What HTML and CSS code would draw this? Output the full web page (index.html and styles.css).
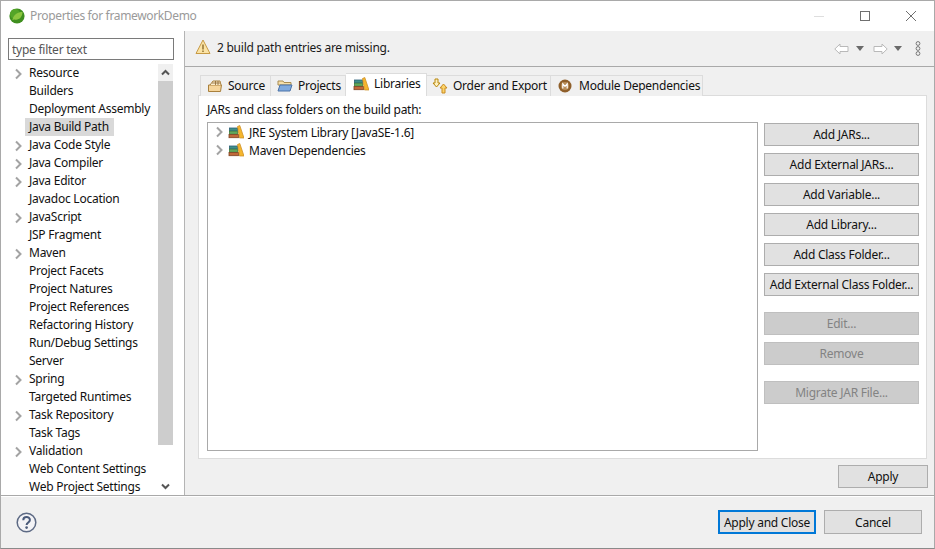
FILE: index.html
```html
<!DOCTYPE html>
<html lang="en">
<head>
<meta charset="utf-8">
<title>Properties for frameworkDemo</title>
<link rel="stylesheet" href="styles.css">
</head>
<body>
<svg class="defs" width="0" height="0">
  <symbol id="chev" viewBox="0 0 8 12"><path d="M2 1.500 6.500 6 2 10.500" fill="none" stroke="#a3a3a3" stroke-width="2"/></symbol>
  <symbol id="lib" viewBox="0 0 16 16">
    <rect x="1.500" y="4" width="8" height="3" fill="#3f8f88" stroke="#2c5f78" stroke-width=".8"/>
    <rect x="1.500" y="7.200" width="8" height="3" fill="#63a85c" stroke="#3e7c3a" stroke-width=".8"/>
    <rect x="1" y="10.400" width="9.500" height="3.300" fill="#c0693a" stroke="#7f4322" stroke-width=".8"/>
    <path d="M9.500 2.500 11.800 1.500 16 14h-4.500z" fill="#f5b62e" stroke="#c98a1e" stroke-width=".7"/>
  </symbol>
</svg>
<div class="window">
  <header class="titlebar">
    <svg class="logo" width="16" height="16" viewBox="0 0 16 16"><circle cx="8" cy="8" r="7.600" fill="#3f8f1f"/><circle cx="6" cy="6" r="5" fill="#54a528"/><path d="M3.500 11.500C5 6 9 4 13.500 4 13.500 9 10 12.500 5.500 11.500 5 11.400 4 12 3.500 12z" fill="#8cc63f"/></svg>
    <span class="title">Properties for frameworkDemo</span>
    <div class="winctl">
      <svg width="12" height="12" viewBox="0 0 12 12"><path d="M1 6.500h10" stroke="#dedede"/></svg>
      <svg width="12" height="12" viewBox="0 0 12 12"><rect x="1.500" y="1.500" width="9" height="9" fill="none" stroke="#6f6f6f"/></svg>
      <svg width="12" height="12" viewBox="0 0 12 12"><path d="M1 1l10 10M11 1 1 11" stroke="#6f6f6f"/></svg>
    </div>
  </header>
  <div class="main">
    <aside class="side">
      <input class="filter" type="text" value="type filter text">
      <div class="treewrap">
        <ul class="nav">
          <li class="exp"><svg class="chev"><use href="#chev"/></svg><span>Resource</span></li>
          <li><span>Builders</span></li>
          <li><span>Deployment Assembly</span></li>
          <li class="sel"><span>Java Build Path</span></li>
          <li class="exp"><svg class="chev"><use href="#chev"/></svg><span>Java Code Style</span></li>
          <li class="exp"><svg class="chev"><use href="#chev"/></svg><span>Java Compiler</span></li>
          <li class="exp"><svg class="chev"><use href="#chev"/></svg><span>Java Editor</span></li>
          <li><span>Javadoc Location</span></li>
          <li class="exp"><svg class="chev"><use href="#chev"/></svg><span>JavaScript</span></li>
          <li><span>JSP Fragment</span></li>
          <li class="exp"><svg class="chev"><use href="#chev"/></svg><span>Maven</span></li>
          <li><span>Project Facets</span></li>
          <li><span>Project Natures</span></li>
          <li><span>Project References</span></li>
          <li><span>Refactoring History</span></li>
          <li><span>Run/Debug Settings</span></li>
          <li><span>Server</span></li>
          <li class="exp"><svg class="chev"><use href="#chev"/></svg><span>Spring</span></li>
          <li><span>Targeted Runtimes</span></li>
          <li class="exp"><svg class="chev"><use href="#chev"/></svg><span>Task Repository</span></li>
          <li><span>Task Tags</span></li>
          <li class="exp"><svg class="chev"><use href="#chev"/></svg><span>Validation</span></li>
          <li><span>Web Content Settings</span></li>
          <li><span>Web Project Settings</span></li>
        </ul>
        <div class="scroll">
          <svg class="sarrow" width="15" height="17" viewBox="0 0 15 17"><path d="M4 10.500 7.500 7l3.500 3.500" fill="none" stroke="#555" stroke-width="2"/></svg>
          <div class="thumb"></div>
          <svg class="sarrow" width="15" height="17" viewBox="0 0 15 17"><path d="M4 6.500 7.500 10l3.500-3.500" fill="none" stroke="#555" stroke-width="2"/></svg>
        </div>
      </div>
    </aside>
    <section class="pane">
      <div class="msgbar">
        <svg class="warn" width="16" height="16" viewBox="0 0 16 16"><path d="M8 1 15 14.500H1z" fill="#fbe3a4" stroke="#c79a45" stroke-linejoin="round"/><path d="M8 5.500v5M8 11.500v1.600" stroke="#8a6a2a" stroke-width="1.400"/></svg>
        <span class="msg">2 build path entries are missing.</span>
        <div class="nav-tools">
          <svg width="15" height="12" viewBox="0 0 15 12"><path d="M.8 6 6 1v2.500h8v5H6V11z" fill="#fff" stroke="#b9b9b9"/></svg>
          <svg class="drop" width="8" height="5" viewBox="0 0 8 5"><path d="M0 0h8L4 5z" fill="#6a6a6a"/></svg>
          <svg class="fwd" width="15" height="12" viewBox="0 0 15 12"><path d="M14.200 6 9 1v2.500H1v5h8V11z" fill="#fff" stroke="#b9b9b9"/></svg>
          <svg class="drop" width="8" height="5" viewBox="0 0 8 5"><path d="M0 0h8L4 5z" fill="#6a6a6a"/></svg>
          <svg class="dots" width="6" height="15" viewBox="0 0 6 15"><g fill="none" stroke="#777"><circle cx="3" cy="2.500" r="1.900"/><circle cx="3" cy="7.500" r="1.900"/><circle cx="3" cy="12.500" r="1.900"/></g></svg>
        </div>
      </div>
      <div class="body">
        <div class="tabs">
          <div class="tab t1"><svg width="16" height="16" viewBox="0 0 16 16"><path d="M1.500 13.500 1.500 7h13l-1 6.500z" fill="#f6d59b" stroke="#a9803d"/><path d="M3 7 6 3h7l1 4" fill="#fbeccc" stroke="#a9803d"/><path d="M8.500 3v4M11 3v4M5 5h8" stroke="#8a6430" stroke-width=".8"/></svg><span>Source</span></div>
          <div class="tab t2"><svg width="16" height="16" viewBox="0 0 16 16"><path d="M1 3h5l1 1.500h7V7H1z" fill="#f6dfa8" stroke="#a98c52"/><path d="M1 13 3 7h12l-2 6z" fill="#7fa9dd" stroke="#4b72a8"/></svg><span>Projects</span></div>
          <div class="tab t3 on"><svg width="16" height="16"><use href="#lib"/></svg><span>Libraries</span></div>
          <div class="tab t4"><svg width="16" height="16" viewBox="0 0 16 16"><path d="M3 1h3v4h2L4.500 9 1 5h2z" fill="#fdf0c0" stroke="#b8860b"/><path d="M10 15V10H8l3.500-4 3.500 4h-2v5z" fill="#fbd36a" stroke="#c98a1e"/></svg><span>Order and Export</span></div>
          <div class="tab t5"><svg width="14" height="14" viewBox="0 0 14 14"><circle cx="7" cy="7" r="6.500" fill="#8f5f2a"/><circle cx="7" cy="7" r="4" fill="#b98d58"/><path d="M4.800 9.500V4.800l2.200 2.500 2.200-2.500v4.700" fill="none" stroke="#fff" stroke-width="1.200"/></svg><span>Module Dependencies</span></div>
        </div>
        <div class="tabbody">
          <div class="leftcol">
            <div class="label">JARs and class folders on the build path:</div>
            <div class="libtree">
              <div class="libitem"><svg class="chev"><use href="#chev"/></svg><svg width="16" height="16"><use href="#lib"/></svg><span>JRE System Library [JavaSE-1.6]</span></div>
              <div class="libitem"><svg class="chev"><use href="#chev"/></svg><svg width="16" height="16"><use href="#lib"/></svg><span>Maven Dependencies</span></div>
            </div>
          </div>
          <div class="btncol">
            <button class="btn">Add JARs...</button>
            <button class="btn">Add External JARs...</button>
            <button class="btn">Add Variable...</button>
            <button class="btn">Add Library...</button>
            <button class="btn">Add Class Folder...</button>
            <button class="btn">Add External Class Folder...</button>
            <button class="btn off gap1">Edit...</button>
            <button class="btn off">Remove</button>
            <button class="btn off gap2">Migrate JAR File...</button>
          </div>
        </div>
        <div class="applyrow"><button class="btn apply">Apply</button></div>
      </div>
    </section>
  </div>
  <footer class="footer">
    <svg class="help" width="21" height="21" viewBox="0 0 21 21"><circle cx="10.500" cy="10.500" r="9.300" fill="#f3f3f6" stroke="#5d6a84" stroke-width="1.500"/><path d="M7.300 8.200c0-4.200 6.600-4.200 6.600-.2 0 2.500-3.300 2.500-3.300 5" fill="none" stroke="#4a5a7a" stroke-width="2"/><circle cx="10.600" cy="15.600" r="1.300" fill="#4a5a7a"/></svg>
    <div class="foot-btns">
      <button class="btn fbtn def">Apply and Close</button>
      <button class="btn fbtn">Cancel</button>
    </div>
  </footer>
</div>
</body>
</html>
```
FILE: styles.css
```css
* { box-sizing: border-box; }
html, body { margin: 0; padding: 0; }
body { width: 935px; height: 549px; overflow: hidden; background: #fff; font-family: "Noto Sans", "Open Sans", sans-serif; font-size: 12px; letter-spacing: -0.25px; color: #111; }
.defs { position: absolute; }
.window { width: 935px; height: 549px; border: 1px solid #a9a9a9; border-bottom-color: #8a8a8a; display: flex; flex-direction: column; background: #fff; }
.titlebar { height: 30px; flex: none; display: flex; align-items: center; padding-left: 8px; padding-bottom: 1px; background: #fff; }
.logo { flex: none; margin-top: 1px; }
.title { margin-left: 5px; color: #9a9a9a; font-size: 12px; letter-spacing: -0.35px; }
.winctl { margin-left: auto; display: flex; gap: 34px; align-items: center; padding-right: 17px; }
.main { flex: none; height: 464px; display: flex; }
.side { width: 184px; flex: none; border-right: 1px solid #b4b4b4; padding: 7px 10px 0 7px; background: #fff; display: flex; flex-direction: column; }
.filter { width: 166px; height: 22px; flex: none; border: 1px solid #7a7a7a; padding: 0 3px; font: inherit; letter-spacing: inherit; color: #555; background: #fff; outline: none; }
.treewrap { display: flex; margin-top: 4px; height: 431px; overflow: hidden; }
.nav { list-style: none; margin: 0; padding: 0; width: 150px; flex: none; }
.nav li { height: 18px; padding-left: 21px; position: relative; line-height: 18px; white-space: nowrap; }
.nav li span { display: block; }
.nav li.sel span { display: inline-block; background: #d9d9d9; margin-left: -4px; padding: 0 4px; width: 89px; }
.nav .chev { position: absolute; left: 6px; top: 4px; }
.chev { width: 8px; height: 12px; flex: none; }
.scroll { width: 15px; flex: none; display: flex; flex-direction: column; background: #fff; }
.sarrow { flex: none; background: #f0f0f0; }
.scroll .sarrow:last-child { background: #fff; margin-top: auto; }
.thumb { height: 364px; background: #cdcdcd; flex: none; }
.pane { flex: 1; display: flex; flex-direction: column; background: #f0f0f0; }
.msgbar { height: 36px; flex: none; display: flex; align-items: center; padding: 0 13px 3px 10px; border-bottom: 1px solid #a9a9a9; }
.msg { margin-left: 6px; color: #1a1a1a; }
.nav-tools { margin-left: auto; display: flex; align-items: center; padding-top: 3px; }
.drop { margin-left: 7px; }
.fwd { margin-left: 9px; }
.fwd + .drop { margin-left: 6px; }
.dots { margin-left: 13px; }
.warn { flex: none; }
.body { flex: 1; padding: 7px 7px 0 13px; display: flex; flex-direction: column; }
.tabs { display: flex; height: 22px; align-items: flex-end; margin-left: 2px; flex: none; position: relative; z-index: 1; margin-bottom: -1px; }
.tab { height: 21px; display: flex; align-items: center; background: #f0f0f0; border: 1px solid #dcdcdc; border-bottom: none; border-left: none; padding-left: 6px; padding-bottom: 1px; gap: 5px; white-space: nowrap; }
.tab:first-child { border-left: 1px solid #dcdcdc; }
.tab.t1 { width: 71px; }
.tab.t2 { width: 75px; }
.tab.t3 { width: 81px; }
.tab.t4 { width: 124px; padding-left: 5px; }
.tab.t5 { width: 152px; padding-left: 7px; gap: 7px; }
.tab.on { height: 23px; background: #fff; padding-bottom: 3px; padding-left: 7px; }
.tabbody { height: 364px; flex: none; background: #fff; border: 1px solid #dcdcdc; display: flex; padding: 0 6px 0 8px; }
.leftcol { width: 551px; flex: none; display: flex; flex-direction: column; }
.label { height: 26px; line-height: 27px; white-space: nowrap; }
.libtree { height: 329px; flex: none; border: 1px solid #a9a9a9; }
.libitem { height: 18px; display: flex; align-items: center; padding-left: 7px; gap: 5px; white-space: nowrap; }
.btncol { width: 155px; margin-left: 6px; flex: none; display: flex; flex-direction: column; gap: 7px; padding-top: 27px; }
.btn { height: 23px; flex: none; font: inherit; letter-spacing: inherit; color: #111; background: #e1e1e1; border: 1px solid #adadad; padding: 0 0 1px; white-space: nowrap; }
.btn.off { background: #cccccc; color: #838383; border-color: #bfbfbf; }
.gap1 { margin-top: 9px; }
.gap2 { margin-top: 9px; }
.applyrow { display: flex; justify-content: flex-end; padding-top: 6px; margin-right: -1px; }
.apply { width: 90px; height: 23px; }
.footer { flex: 1; background: #f0f0f0; border-top: 1px solid #a9a9a9; box-shadow: inset 0 1px 0 #fff; display: flex; align-items: center; padding: 0 12px 0 15px; }
.foot-btns { margin-left: auto; display: flex; gap: 8px; }
.fbtn { width: 98px; height: 24px; padding: 0; }
.fbtn.def { border: 2px solid #0078d7; }
```
